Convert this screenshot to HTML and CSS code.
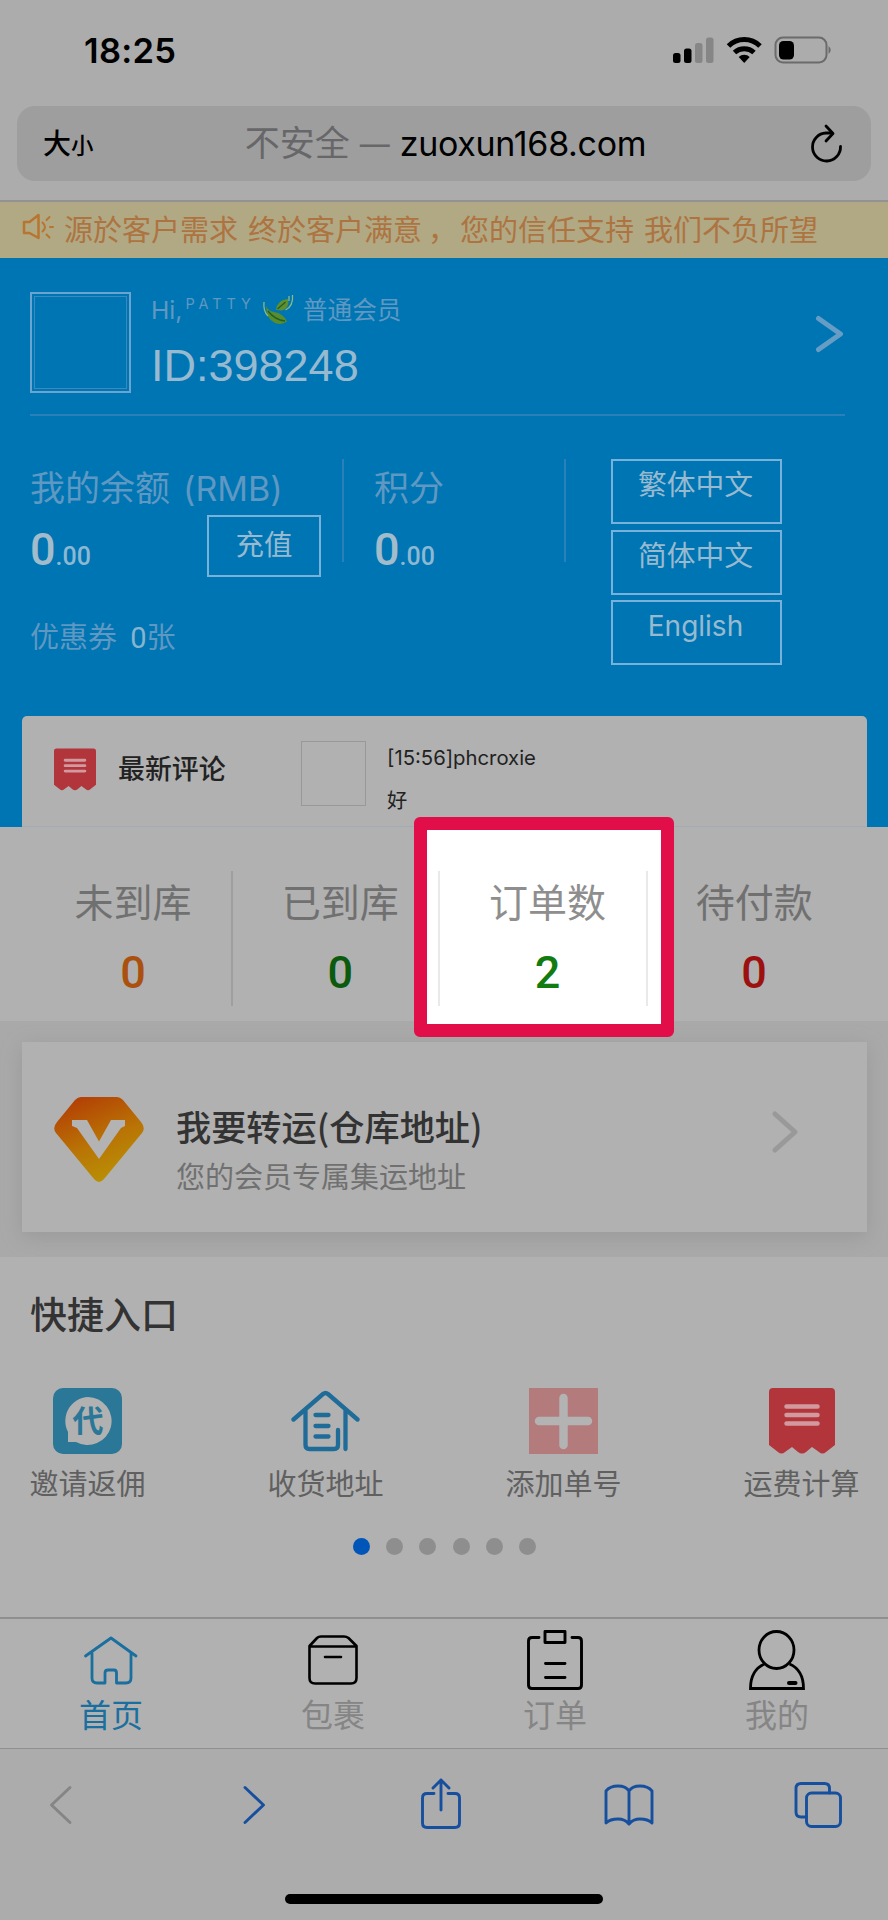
FILE: index.html
```html
<!DOCTYPE html>
<html lang="zh-CN">
<head>
<meta charset="utf-8">
<title>zuoxun168.com</title>
<link rel="stylesheet" href="styles.css">
</head>
<body>
<header class="chrome">
  <div class="status">
    <span class="time">18:25</span>
    <svg class="status-icons" width="160" height="30" viewBox="672 35 160 30">
      <g><rect x="673" y="53" width="7.500" height="10" rx="2.500"/><rect x="684" y="48.500" width="7.500" height="14.500" rx="2.500"/></g>
      <g fill="#868686"><rect x="695" y="43" width="7.500" height="20" rx="2.500"/><rect x="706" y="37.500" width="7.500" height="25.500" rx="2.500"/></g>
      <g fill="none" stroke="#000" stroke-width="5"><path d="M728.500 46a22.500 22.500 0 0 1 31.500 0"/><path d="M734.500 52.500a14.500 14.500 0 0 1 19.500 0"/></g>
      <path d="M738.700 57a8 8 0 0 1 11 0l-5.500 6z"/>
      <rect x="775.500" y="37.500" width="51" height="25" rx="7.500" fill="none" stroke="#6b6b6b" stroke-width="2"/>
      <rect x="779" y="41" width="15" height="18.500" rx="4.500"/>
      <path d="M828.500 46q4.500 4 0 8z" fill="#6b6b6b"/>
    </svg>
  </div>
  <div class="address">
    <span class="size">大<small>小</small></span>
    <span class="url"><i>不安全</i><i class="dash">—</i><b>zuoxun168.com</b></span>
    <svg class="reload" width="36" height="42" viewBox="0 0 36 42" fill="none" stroke="#000" stroke-width="2.800" stroke-linecap="round" stroke-linejoin="round"><path d="M23.500 10H18A14 14 0 1 0 32.500 23.500"/><path d="M18 3l7 7.500-7 7.500"/></svg>
  </div>
</header>
<div class="notice">
  <svg width="34" height="28" viewBox="0 0 34 28" fill="none" stroke="#b8752f" stroke-width="2.500" stroke-linejoin="round" stroke-linecap="round"><path d="M2 9h5.500L16.500 2v23L7.500 20H2z"/><path d="M20.500 9.500q5 4.500 0 9M24.500 7l3-3M28 14h3M24.500 21.500l3 3" stroke-width="2"/></svg>
  <span>源於客户需求 终於客户满意<em>，</em>您的信任支持 我们不负所望</span>
</div>
<section class="member">
  <div class="profile">
    <div class="avatar"></div>
    <div class="who">
      <div class="hi"><span>Hi,</span><span class="nick">PATTY</span>
        <svg width="33" height="32" viewBox="0 0 33 32"><path d="M4 12q0 13 9 17 7 2.500 12-1.500Q21 19 12 18 6 17 4 12z" fill="#578d2c"/><path d="M14 16Q15 6 26 5q2 9-6 11.500z" fill="#5f902d"/><path d="M6 17q7 9 17 10M15.500 15l8-7" stroke="#245e27" stroke-width="1.300" fill="none"/><path d="M2 8q-1 9 4 14M30.500 1q1 11-7 15M27 2v5" stroke="#89b984" stroke-width="1.300" fill="none"/></svg>
        <span>普通会员</span></div>
      <div class="uid">ID:398248</div>
    </div>
    <svg class="go" width="30" height="40" viewBox="0 0 30 40" fill="none" stroke="#659dc5" stroke-width="5" stroke-linecap="round" stroke-linejoin="round"><path d="M3.500 4.500L25.500 20 3.500 35.500"/></svg>
  </div>
  <div class="assets">
    <div class="balance">
      <div class="label">我的余额<span class="rmb">(RMB)</span></div>
      <div class="row"><div class="amount">0<small>.00</small></div><div class="recharge">充值</div></div>
      <div class="coupon">优惠券 <b>0</b>张</div>
    </div>
    <div class="points"><div class="label">积分</div><div class="row"><div class="amount">0<small>.00</small></div></div></div>
    <div class="langs"><div>繁体中文</div><div>简体中文</div><div>English</div></div>
  </div>
  <div class="reviews">
    <svg class="bill" width="42" height="43" viewBox="0 0 66 66"><path d="M4 0H62Q66 0 66 4V57L57 64Q53.500 67 50 64L43 59 37 64Q33 67 29 64L23 59 16 64Q12.500 67 9 64L0 57V4Q0 0 4 0Z" fill="#b2353c"/><path d="M17.500 18.500h31M17.500 27h31M17.500 35.500h31" stroke="#d29a9f" stroke-width="4.500" stroke-linecap="round"/></svg>
    <strong>最新评论</strong>
    <div class="thumb"></div>
    <div class="comment"><p>[15:56]phcroxie</p><p>好</p></div>
  </div>
</section>
<section class="stats">
  <div class="stat orange"><span>未到库</span><b>0</b></div>
  <div class="stat green"><span>已到库</span><b>0</b></div>
  <div class="stat active"><span>订单数</span><b>2</b></div>
  <div class="stat red"><span>待付款</span><b>0</b></div>
  <div class="highlight"></div>
</section>
<section class="forward">
  <div class="forward-card">
    <svg width="90" height="86" viewBox="0 0 90 86"><defs><linearGradient id="gem" x1=".2" y1="0" x2=".65" y2="1"><stop offset="0" stop-color="#b33d05"/><stop offset=".55" stop-color="#b97405"/><stop offset="1" stop-color="#b99205"/></linearGradient></defs><path d="M27 0H63Q66 0 69 3L87 25Q92 31 88 36L50 82Q45 88 40 82L2 36Q-2 31 3 25L21 3Q24 0 27 0Z" fill="url(#gem)"/><path d="M18 23H33L45 44.500 57 23H71V29L67 31 45 62 23 31 18 29Z" fill="#b3b3b3"/></svg>
    <div class="forward-text"><h2>我要转运(仓库地址)</h2><p>您的会员专属集运地址</p></div>
    <svg class="more" width="30" height="44" viewBox="0 0 30 44" fill="none" stroke="#999" stroke-width="5" stroke-linecap="round" stroke-linejoin="round"><path d="M5 4L25 22 5 40"/></svg>
  </div>
</section>
<section class="quick">
  <h3>快捷入口</h3>
  <div class="entries">
    <div class="entry">
      <svg width="69" height="66" viewBox="0 0 69 66"><rect width="69" height="66" rx="10" fill="#2a7797"/><path d="M35 9a24 24 0 1 1-12 45h-8V44A24 24 0 0 1 35 9z" fill="#b1b1b1"/><text x="35" y="44" text-anchor="middle" class="agent">代</text></svg>
      <span>邀请返佣</span></div>
    <div class="entry">
      <svg width="69" height="66" viewBox="0 0 69 66" fill="none" stroke="#1f6c99" stroke-width="4.300" stroke-linecap="round" stroke-linejoin="round"><path d="M2.500 31.500L32 6Q34.500 4 37 6L66.500 31.500M14.500 22V57Q14.500 61 18.500 61H43Q47 61 47 57V42M54.500 22V61M24.500 27H37.500M24.500 38H37.500M24.500 48.500H37.500"/></svg>
      <span>收货地址</span></div>
    <div class="entry">
      <svg width="69" height="66" viewBox="0 0 69 66"><path fill="#b37b7b" d="M0 0h69v66H0z"/><path d="M34.500 10V57M10 33H59" stroke="#b3b3b3" stroke-width="8.500" stroke-linecap="round"/></svg>
      <span>添加单号</span></div>
    <div class="entry">
      <svg width="66" height="66" viewBox="0 0 66 66"><path d="M4 0H62Q66 0 66 4V57L57 64Q53.500 67 50 64L43 59 37 64Q33 67 29 64L23 59 16 64Q12.500 67 9 64L0 57V4Q0 0 4 0Z" fill="#b2353c"/><path d="M17.500 18.500h31M17.500 27h31M17.500 35.500h31" stroke="#d29a9f" stroke-width="4.500" stroke-linecap="round"/></svg>
      <span>运费计算</span></div>
  </div>
  <div class="dots"><i class="on"></i><i></i><i></i><i></i><i></i><i></i></div>
</section>
<nav class="tabs">
  <div class="tab on"><svg width="60" height="64" viewBox="0 0 60 64" fill="none" stroke="#1a6f9f" stroke-width="2.800" stroke-linecap="round" stroke-linejoin="round"><path d="M4.500 28L30 10 55 28M11 25V50Q11 55 16 55H24V45Q24 42 27 42H33Q35.500 42 35.500 45V55H45Q50 55 50 50V25"/></svg><span>首页</span></div>
  <div class="tab"><svg width="60" height="64" viewBox="0 0 60 64" fill="none" stroke="#000" stroke-width="2.600" stroke-linejoin="round" stroke-linecap="round"><path d="M6.500 18L14 10Q15.500 8.500 18 8.500H41Q43.500 8.500 45.500 10L53.500 18V50Q53.500 55.500 48 55.500H12Q6.500 55.500 6.500 50ZM6.500 18.500H53.500M22 29H38"/></svg><span>包裹</span></div>
  <div class="tab"><svg width="60" height="64" viewBox="0 0 60 64" fill="none" stroke="#000" stroke-width="2.900" stroke-linejoin="round" stroke-linecap="round"><path d="M14 9.500H7Q3.500 9.500 3.500 13V57Q3.500 60.500 7 60.500H53Q56.500 60.500 56.500 57V13Q56.500 9.500 53 9.500H47M20 3.500H40V14.500H20ZM20.500 35.500H40M20.500 49.500H40"/></svg><span>订单</span></div>
  <div class="tab"><svg width="60" height="64" viewBox="0 0 60 64" fill="none" stroke="#000" stroke-width="2.800" stroke-linecap="round"><ellipse cx="29.500" cy="22" rx="17.500" ry="18.500"/><path d="M17.500 36Q3.500 42 3.500 60.500H56.500Q56.500 42 42.500 36" stroke-linecap="butt"/><path d="M42 55H48.500" stroke-width="4"/></svg><span>我的</span></div>
</nav>
<footer class="toolbar">
  <div class="tools">
    <svg width="48" height="56" viewBox="0 0 48 56" stroke="#858585"><path d="M33 10.500L14.500 28 33 45.500"/></svg>
    <svg width="48" height="56" viewBox="0 0 48 56" stroke="#174f9f"><path d="M16 10.500L34.500 28 16 45.500"/></svg>
    <svg width="48" height="56" viewBox="0 0 48 56" stroke="#174f9f"><path d="M17 16.500H10Q5.500 16.500 5.500 21V46Q5.500 50.500 10 50.500H38Q42.500 50.500 42.500 46V21Q42.500 16.500 38 16.500H31M24 33V3M16 11L24 3 32 11"/></svg>
    <svg width="50" height="56" viewBox="0 0 50 56" stroke="#174f9f"><path d="M25 14Q22 9 14 9 6 9 2 14V46Q6 42 14 42 21 42 25 47 29 42 36 42 44 42 48 46V14Q44 9 36 9 28 9 25 14V47"/></svg>
    <svg width="48" height="56" viewBox="0 0 48 56" stroke="#174f9f"><rect x="12.500" y="16" width="34" height="33.500" rx="5"/><path d="M12 40H7Q2 40 2 35V11.500Q2 6.500 7 6.500H30.500Q35.500 6.500 35.500 11.500V16"/></svg>
  </div>
  <div class="home"></div>
</footer>
</body>
</html>
```
FILE: styles.css
```css
* { box-sizing: border-box; margin: 0; padding: 0; }
body { width: 888px; height: 1920px; overflow: hidden; background: #b1b1b1; font-family: Inter, "Noto Sans CJK SC", sans-serif; color: #333; line-height: 1; }
i, em { font-style: normal; }
svg { display: block; flex: none; }

.chrome { height: 202px; background: #acacac; border-bottom: 2px solid #929292; color: #000; }
.status { height: 106px; padding: 0 56px 6px 84px; display: flex; align-items: center; justify-content: space-between; }
.time { font-size: 34.5px; font-weight: 600; letter-spacing: .3px; padding-top: 2px; }
.address { height: 75px; margin: 0 17px; padding: 0 27px 0 26px; border-radius: 18px; background: #9e9e9e; display: flex; align-items: center; justify-content: space-between; }
.size { font-size: 28px; font-weight: 500; width: 70px; white-space: nowrap; }
.size small { font-size: 22.5px; }
.url { display: flex; align-items: center; font-size: 34px; letter-spacing: -.3px; margin-right: 30px; }
.url i { color: #67676a; font-size: 35px; font-weight: 400; letter-spacing: 0; }
.url .dash { margin: 0 10px; font-size: 30px; }
.url b { font-weight: 400; }

.notice { height: 56px; background: #b1a984; color: #ad7340; padding: 0 0 3px 22px; display: flex; align-items: center; gap: 8px; font-size: 29px; white-space: nowrap; font-family: "Noto Sans CJK SC", sans-serif; word-spacing: 3.5px; }
.notice svg { margin-top: -4px; }
.notice em { padding: 0 3px 0 6px; }

.member { height: 569px; background: #0075b3; padding: 34px 21px 0 22px; display: flex; flex-direction: column; }
.profile { height: 124px; margin: 0 22px 0 8px; border-bottom: 2px solid #2c80b9; display: flex; align-items: flex-start; }
.avatar { width: 101px; height: 101px; border: 2px solid #69a5d0; outline: 1px solid #3b89bd; outline-offset: -5px; }
.who { margin-left: 20px; flex: 1; }
.hi { height: 36px; display: flex; align-items: center; color: #5f98c2; font-size: 24.7px; }
.nick { font-size: 14.5px; letter-spacing: 4.9px; margin: -12px 6px 0 3px; }
.hi svg { margin-right: 8px; }
.uid { font-family: "Liberation Sans", sans-serif; font-size: 45px; line-height: 48px; margin-top: 14px; color: #98bad0; }
.go { margin: 22px 0 0; }
.assets { height: 300px; padding: 43px 0 0 8px; display: flex; }
.label { font-size: 35px; line-height: 54px; height: 54px; color: #5f98c2; white-space: nowrap; }
.rmb { margin-left: 13px; font-size: 34px; }
.balance { width: 312px; }
.balance .label, .points .label { margin-top: 2px; }
.balance .row { width: 291px; }
.row { display: flex; justify-content: space-between; height: 62px; }
.amount { font-family: Roboto, sans-serif; font-size: 45px; line-height: 70px; font-weight: 500; color: #a3bccb; }
.amount small { font-size: 25px; color: #8db8d3; }
.recharge { width: 114px; height: 62px; border: 2px solid #78b1d9; color: #98bad0; font-size: 28.5px; line-height: 56px; text-align: center; }
.coupon { margin-top: 44px; font-size: 29px; line-height: 34px; color: #5f98c2; }
.coupon b { font-family: Roboto, sans-serif; margin-left: 5px; font-size: 29px; font-weight: 400; color: #88b4cf; }
.points { width: 224px; height: 103px; padding-left: 30px; border: solid #2c80b9; border-width: 0 2px; }
.langs { margin-left: 45px; display: grid; grid-template-rows: repeat(3, 65px); row-gap: 5.5px; }
.langs div { width: 171px; height: 65px; border: 2px solid #78b1d9; color: #98bad0; text-align: center; font-size: 28.8px; line-height: 48px; padding-right: 2px; }
.langs div:last-child { font-size: 28px; }
.reviews { height: 111px; background: #b1b1b1; border-radius: 5px 5px 0 0; border-bottom: 1px solid #a4abb3; padding: 25px 0 0 32px; display: flex; align-items: flex-start; color: #222; }
.bill { margin-top: 7px; }
.reviews strong { font-size: 26.9px; line-height: 30px; font-weight: 500; margin: 13px 0 0 22px; width: 183px; }
.thumb { width: 65px; height: 65px; border: 1px solid #989898; }
.comment { margin-left: 21px; font-size: 20.3px; line-height: 34px; white-space: nowrap; }
.comment p + p { line-height: 20px; margin-top: 16px; }

.stats { position: relative; height: 194px; padding: 44px 33px 0 26px; display: grid; grid-template-columns: repeat(4, 207.2px); }
.stat { position: relative; z-index: 1; height: 135px; padding-left: 9px; border-right: 2px solid #9f9f9f; display: flex; flex-direction: column; align-items: center; color: #707070; }
.stat span { font-size: 39px; line-height: 62px; padding-top: 1px; }
.stat b { font-family: Roboto, sans-serif; font-size: 45px; line-height: 54px; font-weight: 500; margin-top: 12px; }
.stat:nth-child(2) { border-color: #e9e9e9; }
.stat.active { color: #8e8e8e; border-color: #e9e9e9; }
.orange b { color: #aa5110; }
.green b { color: #0b5a0d; }
.active b { color: #137c10; }
.stat.red { border: 0; padding-left: 6px; }
.red b { color: #9d1010; }
.highlight { position: absolute; left: 414px; top: -10px; width: 260px; height: 220px; background: #fff; border: 13px solid #e20e49; border-radius: 6px; }

.forward { height: 236px; background: #a9a9a9; padding: 21px 21px 0 22px; }
.forward-card { height: 190px; background: #b1b1b1; box-shadow: 0 5px 18px #9a9a9a; display: flex; align-items: flex-start; padding: 55px 67px 0 32px; }
.forward-text { margin: 7px 0 0 32px; flex: 1; white-space: nowrap; }
.forward-text h2 { font-family: "Noto Sans CJK SC", sans-serif; font-size: 35.2px; line-height: 44px; font-weight: 500; }
.forward-text p { font-size: 29px; line-height: 34px; margin-top: 13px; color: #707070; }
.more { margin-top: 13px; }

.quick { height: 360px; padding: 38px 28px 0 29px; background: #b1b1b1; }
.quick h3 { font-size: 37px; line-height: 42px; font-weight: 500; padding-left: 1px; }
.entries { display: flex; justify-content: space-between; margin-top: 51px; }
.entry { width: 117px; display: flex; flex-direction: column; align-items: center; }
.entry span { margin-top: 14px; font-size: 29px; line-height: 34px; color: #606060; white-space: nowrap; }
.agent { font: 700 31px "Noto Sans CJK SC", sans-serif; fill: #2a7797; }
.dots { display: flex; justify-content: center; gap: 16.3px; margin-top: 36px; }
.dots i { width: 17px; height: 17px; border-radius: 50%; background: #8e8e8e; }
.dots .on { background: #0056b8; }

.tabs { height: 132px; border-top: 2px solid #8f8f8f; border-bottom: 1px solid #8f8f8f; display: grid; grid-template-columns: repeat(4, 1fr); background: #b1b1b1; }
.tab { padding-top: 9px; display: flex; flex-direction: column; align-items: center; color: #858585; font-size: 32px; line-height: 40px; }
.tab span { margin-top: 4px; }
.tab.on { color: #1a6f9f; }
.toolbar { height: 171px; background: #acacac; }
.tools { height: 145px; padding: 28px 0 0 36.5px; display: grid; grid-template-columns: 192px 188px 187.5px 189.5px 48px; align-items: start; }
.tools svg { fill: none; stroke-width: 2.9; stroke-linecap: round; stroke-linejoin: round; }
.home { width: 318px; height: 10px; border-radius: 5px; background: #000; margin: 0 auto; }
```
